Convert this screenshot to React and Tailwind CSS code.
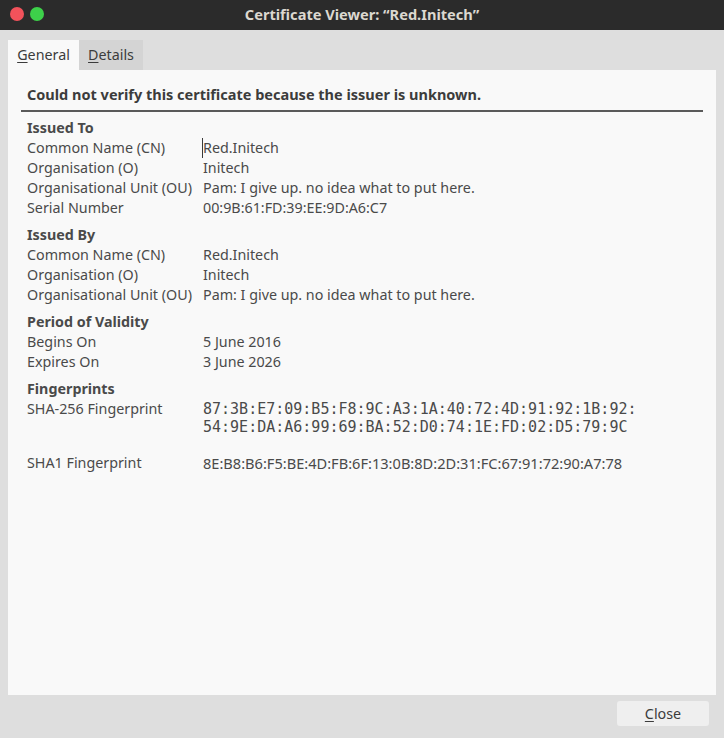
import React from 'react'

const sans = { fontFamily: '"Noto Sans", "DejaVu Sans", sans-serif' }
const mono = { fontFamily: '"DejaVu Sans Mono", monospace' }

const Row = ({ label, children, cursor, valueClass }) => (
  <div className="flex h-[20px] leading-[20px]">
    <div className="w-[176px] shrink-0">{label}</div>
    <div className={(cursor ? 'border-l border-[#3a3a3a] -ml-px ' : '') + (valueClass || '')}>{children}</div>
  </div>
)

const Section = ({ title, children, first }) => (
  <div className={first ? 'mt-[6px]' : 'mt-[7px]'}>
    <div className="h-[20px] leading-[20px] font-bold">{title}</div>
    {children}
  </div>
)

export default function App() {
  return (
    <div className="w-[724px] h-[738px] bg-[#dedede] flex flex-col text-[14.3px] text-[#4a4a4a]" style={sans}>
      {/* title bar */}
      <div className="relative h-[30px] bg-[#2b2b2b] flex items-center justify-center shrink-0">
        <div className="absolute left-[10px] top-[7px] flex gap-[6px]">
          <span className="w-[14px] h-[14px] rounded-full bg-[#f2525b]" />
          <span className="w-[14px] h-[14px] rounded-full bg-[#3dd14a]" />
        </div>
        <span className="font-bold text-[14.6px] text-[#dcd8d0]">Certificate Viewer: “Red.Initech”</span>
      </div>

      {/* tabs */}
      <div className="flex px-[8px] pt-[10px] shrink-0">
        <div className="h-[30px] w-[71px] bg-[#f9f9f9] flex items-center justify-center text-[#3c3c3c]">
          <span><u className="underline-offset-2">G</u>eneral</span>
        </div>
        <div className="h-[30px] w-[64px] bg-[#d4d4d4] flex items-center justify-center text-[#3c3c3c]">
          <span><u className="underline-offset-2">D</u>etails</span>
        </div>
      </div>

      {/* panel */}
      <div className="mx-[8px] h-[625px] bg-[#f9f9f9] px-[13px] pt-[14px] shrink-0">
        <div className="pl-[6px] h-[20px] leading-[20px] font-bold text-[14.5px] text-[#3c3c3c]">
          Could not verify this certificate because the issuer is unknown.
        </div>
        <div className="mt-[6px] h-[2px] bg-[#5a5a5a]" />
        <div className="pl-[6px]">
          <Section title="Issued To" first>
            <Row label="Common Name (CN)" cursor>Red.Initech</Row>
            <Row label="Organisation (O)">Initech</Row>
            <Row label="Organisational Unit (OU)">Pam: I give up. no idea what to put here.</Row>
            <Row label="Serial Number">00:9B:61:FD:39:EE:9D:A6:C7</Row>
          </Section>
          <Section title="Issued By">
            <Row label="Common Name (CN)">Red.Initech</Row>
            <Row label="Organisation (O)">Initech</Row>
            <Row label="Organisational Unit (OU)">Pam: I give up. no idea what to put here.</Row>
          </Section>
          <Section title="Period of Validity">
            <Row label="Begins On">5 June 2016</Row>
            <Row label="Expires On">3 June 2026</Row>
          </Section>
          <Section title="Fingerprints">
            <div className="flex">
              <div className="w-[176px] shrink-0 h-[20px] leading-[20px]">SHA-256 Fingerprint</div>
              <div className="text-[15px] leading-[18px] pt-[1px]" style={mono}>
                <div>87:3B:E7:09:B5:F8:9C:A3:1A:40:72:4D:91:92:1B:92:</div>
                <div>54:9E:DA:A6:99:69:BA:52:D0:74:1E:FD:02:D5:79:9C</div>
              </div>
            </div>
            <div className="mt-[17px]">
              <Row label="SHA1 Fingerprint" valueClass="text-[14.6px]">8E:B8:B6:F5:BE:4D:FB:6F:13:0B:8D:2D:31:FC:67:91:72:90:A7:78</Row>
            </div>
          </Section>
        </div>
      </div>

      {/* footer */}
      <div className="flex justify-end pr-[15px] pt-[6px]">
        <button className="w-[92px] h-[25px] rounded-[3px] bg-[#efefef] text-[#3c3c3c] flex items-center justify-center">
          <span><u className="underline-offset-2">C</u>lose</span>
        </button>
      </div>
    </div>
  )
}
